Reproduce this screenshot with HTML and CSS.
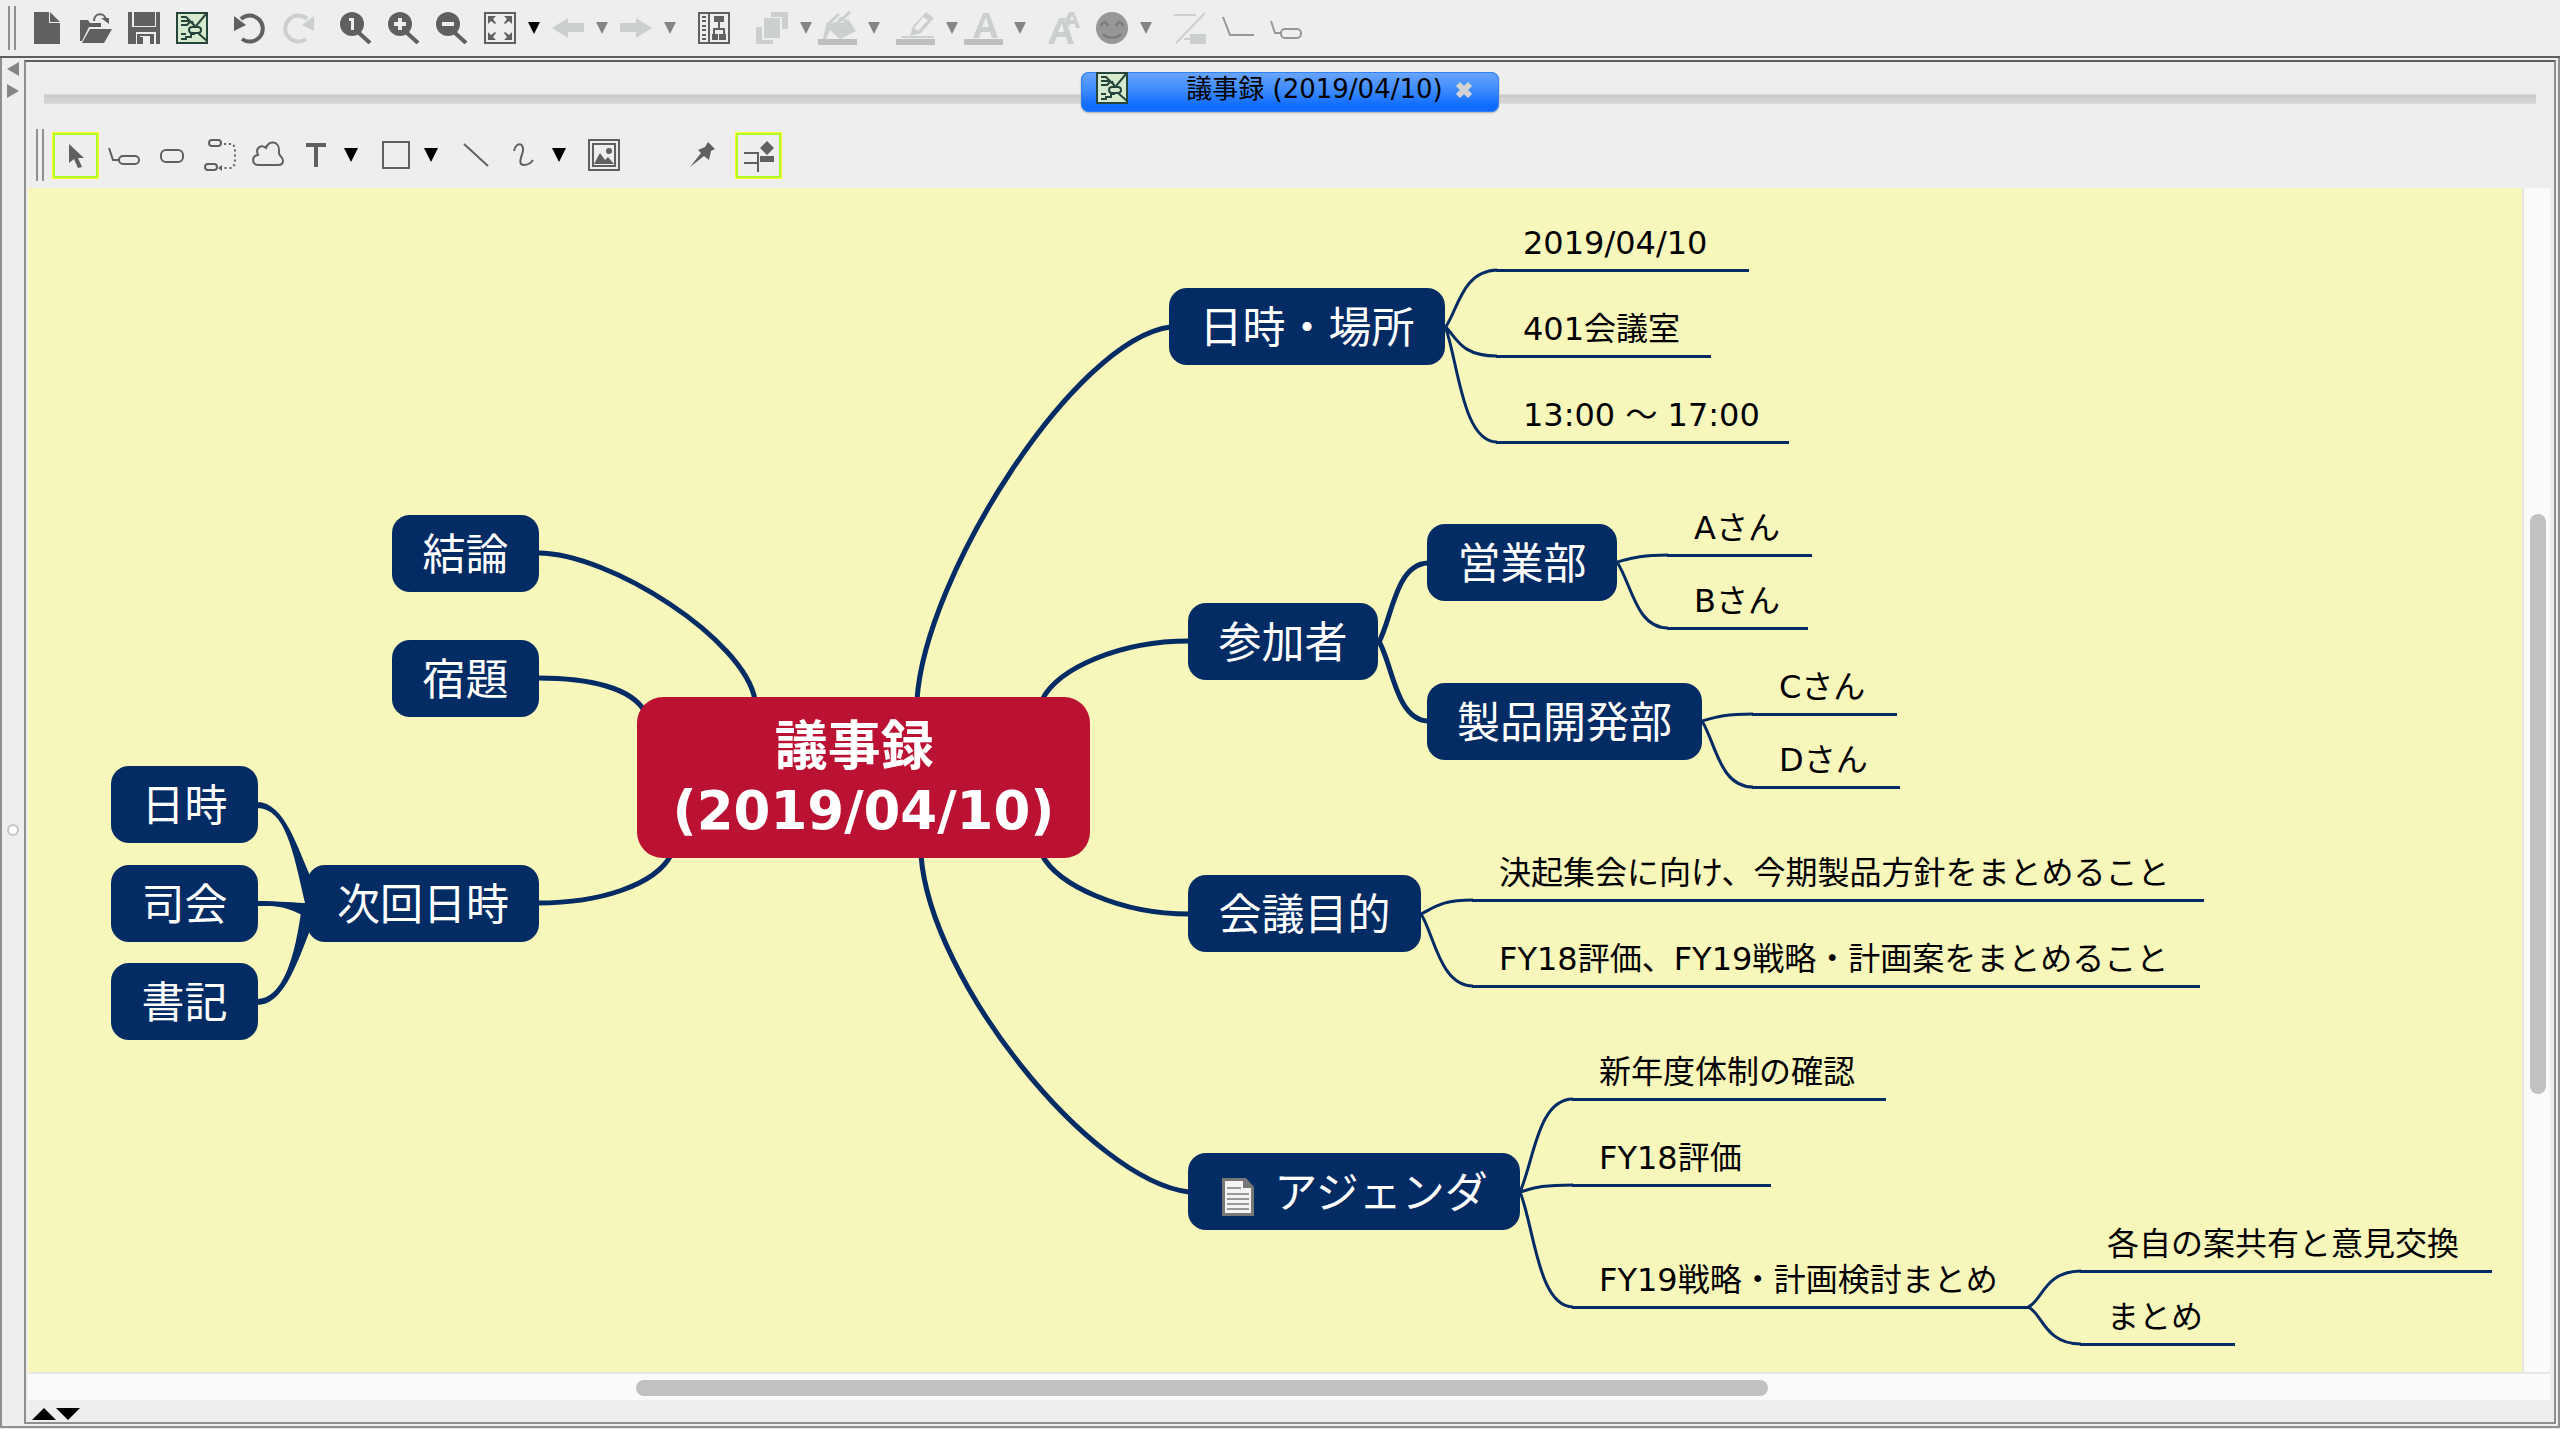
FILE: index.html
```html
<!DOCTYPE html>
<html lang="ja">
<head>
<meta charset="utf-8">
<title>議事録 (2019/04/10)</title>
<link rel="stylesheet" href="styles.css">
</head>
<body>
<svg class="defs" width="0" height="0" aria-hidden="true">
  <symbol id="caret" viewBox="0 0 12 12"><path d="M0 0h12L6 12z"/></symbol>
  <symbol id="doc" viewBox="0 0 32 32">
    <rect x="1" y="1" width="30" height="30" fill="#d8eacd" stroke="#25453a" stroke-width="2"/>
    <g fill="none" stroke="#25453a" stroke-width="2">
      <path d="M5 5h5l9 9M5 9h8M5 13h6l3-3M30 2L20 14M5 22h5M5 27h5v-2h5v-3h3v-3M22 21l9 8M16 9l2 5"/>
      <rect x="13" y="15" width="12" height="6" rx="3" fill="#d8eacd"/>
    </g>
  </symbol>
</svg>

<header class="toolbar main-toolbar" role="toolbar">
  <span class="grip"></span>
  <button class="tool" aria-label="新規"><svg viewBox="0 0 32 32"><path d="M2 0h15v11h11v21H2zM18 0l10 10H18z"/></svg></button>
  <button class="tool" aria-label="開く"><svg viewBox="0 0 32 32"><path d="M0 8h8l2 3h11v4H9L2 29H0zM10 17h22l-8 14H2z"/><path d="M14 9c0-9 12-9 12 0" fill="none" stroke="currentColor" stroke-width="2"/><path d="M21 6h8v6z"/></svg></button>
  <button class="tool" aria-label="保存"><svg viewBox="0 0 32 32"><path d="M0 0h4v15h24V0h4v32h-4V20H8v12H0zM6 0h21v14H6zM9 22h17v10h-4v-8h-10v8H9zM12 25h3v7h-3z"/></svg></button>
  <button class="tool" aria-label="マップ"><svg><use href="#doc"/></svg></button>
  <button class="tool wide" aria-label="元に戻す"><svg viewBox="0 0 32 32"><path d="M7 7a13 13 0 1 1 1 20" fill="none" stroke="currentColor" stroke-width="4"/><path d="M0 4l12 9L0 19z"/></svg></button>
  <button class="tool off" aria-label="やり直し"><svg viewBox="0 0 32 32"><path d="M25 7a13 13 0 1 0-1 20" fill="none" stroke="currentColor" stroke-width="4"/><path d="M32 4l-12 9 12 6z"/></svg></button>
  <button class="tool wide" aria-label="等倍"><svg viewBox="0 0 32 32"><circle cx="12" cy="12" r="12"/><path d="M18 20l12 11" stroke="currentColor" stroke-width="4"/><path d="M9 6h5v12h-3V9H9z" fill="#eee"/></svg></button>
  <button class="tool" aria-label="拡大"><svg viewBox="0 0 32 32"><circle cx="12" cy="12" r="12"/><path d="M18 20l12 11" stroke="currentColor" stroke-width="4"/><path d="M6 12h12M12 6v12" stroke="#eee" stroke-width="4"/></svg></button>
  <button class="tool" aria-label="縮小"><svg viewBox="0 0 32 32"><circle cx="12" cy="12" r="12"/><path d="M18 20l12 11" stroke="currentColor" stroke-width="4"/><path d="M6 12h12" stroke="#eee" stroke-width="4"/></svg></button>
  <button class="tool" aria-label="全体表示"><svg viewBox="0 0 32 32"><rect x="1" y="1" width="30" height="30" fill="none" stroke="currentColor" stroke-width="2"/><path d="M4 4h8l-3 3 3 4-1 1-4-3-3 3zM28 4h-8l3 3-3 4 1 1 4-3 3 3zM4 28h8l-3-3 3-4-1-1-4 3-3-3zM28 28h-8l3-3-3-4 1-1 4 3 3-3z"/></svg></button>
  <button class="caret" aria-label="表示メニュー"><svg><use href="#caret"/></svg></button>
  <button class="tool after-caret off" aria-label="戻る"><svg viewBox="0 0 32 32"><path d="M0 16L16 6v5h16v9H16v6z"/></svg></button>
  <button class="caret dim" aria-label="戻るメニュー"><svg><use href="#caret"/></svg></button>
  <button class="tool after-caret off" aria-label="進む"><svg viewBox="0 0 32 32"><path d="M32 16L16 6v5H0v9h16v6z"/></svg></button>
  <button class="caret dim" aria-label="進むメニュー"><svg><use href="#caret"/></svg></button>
  <button class="tool medium" aria-label="アウトライン"><svg viewBox="0 0 32 32"><path d="M1 1h30v30H1zM11 1v30" fill="none" stroke="currentColor" stroke-width="2"/><path d="M4 5h4M4 9h4M4 14h4M4 18h4M4 23h4M4 27h4" stroke="currentColor" stroke-width="2"/><path d="M16 4h10v6h-4v6h5v6h1v6h-7v-6h4v-4h-8v4h3v6h-6v-6h1v-6h5v-6h-4z"/></svg></button>
  <button class="tool wide off" aria-label="重ね順"><svg viewBox="0 0 32 32"><path d="M15 0h17v17h-6V5H15zM8 6h16v20H8zM0 15h6v13h11v4H0z"/></svg></button>
  <button class="caret dim" aria-label="重ね順メニュー"><svg><use href="#caret"/></svg></button>
  <button class="tool swatch tight off" aria-label="塗り色"><svg viewBox="0 0 40 34"><path d="M9 14l12-4 5 5 5-7 8 12-16 8-10-9-4 9H6z"/><path d="M10 14L22 3M23 10L33 1" stroke="currentColor" stroke-width="3" fill="none"/><circle cx="25" cy="10" r="3" fill="none" stroke="currentColor" stroke-width="2"/><path d="M1 28h39v6H1z" fill="#bfbfbf"/></svg></button>
  <button class="caret dim" aria-label="塗り色メニュー"><svg><use href="#caret"/></svg></button>
  <button class="tool swatch after-swatch off" aria-label="線の色"><svg viewBox="0 0 40 34"><path fill-rule="evenodd" d="M15 25l3-10L31 1l8 6-13 15zM19 17l4 3 10-11-5-3z"/><path d="M6 26h33" stroke="currentColor" stroke-width="2"/><path d="M1 28h39v6H1z" fill="#bfbfbf"/></svg></button>
  <button class="caret dim" aria-label="線の色メニュー"><svg><use href="#caret"/></svg></button>
  <button class="tool swatch tight off" aria-label="文字色"><svg viewBox="0 0 40 34"><path d="M10 27L20 2h6l9 25h-6l-2-6h-9l-2 6zM19 16h7l-3-10z" fill-rule="evenodd"/><path d="M1 28h39v6H1z" fill="#bfbfbf"/></svg></button>
  <button class="caret dim" aria-label="文字色メニュー"><svg><use href="#caret"/></svg></button>
  <button class="tool medium off" aria-label="フォント"><svg viewBox="0 0 32 32"><path fill-rule="evenodd" d="M0 32L11 6h6l9 26h-6l-2-7H9l-3 7zM10 20h6l-2-9zM17 8l4-8h5l6 16h-4l-1-4h-5l-1 3zM22 8h4l-2-5z"/></svg></button>
  <button class="tool face" aria-label="アイコン"><svg viewBox="0 0 32 32"><circle cx="16" cy="16" r="16" fill="#979797"/><path d="M5 14c2-5 5-5 7 0M20 14c2-5 5-5 7 0M7 22c5 5 13 5 18 0" fill="none" stroke="#777" stroke-width="2"/></svg></button>
  <button class="caret dim" aria-label="アイコンメニュー"><svg><use href="#caret"/></svg></button>
  <button class="tool medium off" aria-label="リンク線"><svg viewBox="0 0 32 32"><path d="M0 3h22M2 31L31 1M10 27h8" stroke="currentColor" stroke-width="2"/><path d="M16 22h16v10H16z"/></svg></button>
  <button class="tool gray" aria-label="線トピック"><svg viewBox="0 0 32 32"><path d="M1 5l7 18h24" fill="none" stroke="currentColor" stroke-width="2"/></svg></button>
  <button class="tool gray" aria-label="枠トピック"><svg viewBox="0 0 32 32"><path d="M1 9l4 12h6" fill="none" stroke="currentColor" stroke-width="2"/><rect x="11" y="17" width="20" height="9" rx="4" fill="none" stroke="currentColor" stroke-width="2"/></svg></button>
</header>

<main class="workspace">
  <aside class="divider">
    <button class="fold" aria-label="左へ"><svg viewBox="0 0 12 14"><path d="M12 0v14L0 7z"/></svg></button>
    <button class="fold" aria-label="右へ"><svg viewBox="0 0 12 14"><path d="M0 0v14l12-7z"/></svg></button>
    <span class="knob"></span>
  </aside>
  <section class="frame">
    <nav class="tabs">
      <div class="tab">
        <svg class="tab-icon"><use href="#doc"/></svg>
        <button class="tab-title">議事録 (2019/04/10)</button>
        <button class="tab-close" aria-label="閉じる"><svg viewBox="0 0 18 18"><path d="M3 3l12 12M15 3L3 15" stroke="#d3d3d3" stroke-width="6"/></svg></button>
      </div>
    </nav>
    <div class="toolbar edit-toolbar" role="toolbar">
      <span class="grip"></span>
      <button class="tool picked" aria-label="選択"><svg viewBox="0 0 32 32"><path d="M9 4v19l5-4 4 9 4-1-4-9h6z"/></svg></button>
      <button class="tool first" aria-label="トピック"><svg viewBox="0 0 32 32"><path d="M1 9l4 12h6" fill="none" stroke="currentColor" stroke-width="2"/><rect x="11" y="17" width="20" height="8" rx="4" fill="none" stroke="currentColor" stroke-width="2"/></svg></button>
      <button class="tool" aria-label="フローティング"><svg viewBox="0 0 32 32"><rect x="5" y="11" width="22" height="12" rx="5" fill="none" stroke="currentColor" stroke-width="2"/></svg></button>
      <button class="tool" aria-label="関連線"><svg viewBox="0 0 32 32"><g fill="none" stroke="currentColor" stroke-width="2"><rect x="5" y="1" width="12" height="6" rx="3"/><rect x="1" y="25" width="12" height="6" rx="3"/><path d="M20 5h9l2 4v16l-3 4H17" stroke-dasharray="2 3"/></g><path d="M18 26v6l-4-3z"/></svg></button>
      <button class="tool" aria-label="雲"><svg viewBox="0 0 32 32"><path d="M6 26C0 26-1 17 6 16C3 9 9 5 14 9C16 1 28 1 27 13C26 17 31 17 31 22Q31 26 26 26Z" fill="none" stroke="currentColor" stroke-width="2"/></svg></button>
      <button class="tool" aria-label="テキスト"><svg viewBox="0 0 32 32"><path d="M6 4h20v4h-8v20h-4V8H6z"/></svg></button>
      <button class="caret big" aria-label="テキストメニュー"><svg><use href="#caret"/></svg></button>
      <button class="tool medium" aria-label="図形"><svg viewBox="0 0 32 32"><rect x="3" y="3" width="26" height="26" fill="none" stroke="currentColor" stroke-width="2"/></svg></button>
      <button class="caret big" aria-label="図形メニュー"><svg><use href="#caret"/></svg></button>
      <button class="tool medium" aria-label="直線"><svg viewBox="0 0 32 32"><path d="M4 5l24 22" stroke="currentColor" stroke-width="2"/></svg></button>
      <button class="tool" aria-label="曲線"><svg viewBox="0 0 32 32"><path d="M6 12c2-9 10-9 9 0-1 5-6 14 1 14 4 0 7-2 9-5" fill="none" stroke="currentColor" stroke-width="2"/></svg></button>
      <button class="caret big" aria-label="曲線メニュー"><svg><use href="#caret"/></svg></button>
      <button class="tool medium" aria-label="画像"><svg viewBox="0 0 32 32"><path d="M1 1h30v30H1zM5 5h22v22H5z" fill="none" stroke="currentColor" stroke-width="2"/><path d="M6 25l6-11 5 7 3-3 6 7z"/><circle cx="21" cy="12" r="3"/></svg></button>
      <button class="tool apart" aria-label="固定"><svg viewBox="0 0 32 32"><path d="M21 3l7 7-4 2-2 9-5-4L3 28l11-14-3-3 7-3z"/></svg></button>
      <button class="tool picked second" aria-label="自動配置"><svg viewBox="0 0 32 32"><path d="M1 13h14M1 23h14M15 12v20" fill="none" stroke="currentColor" stroke-width="2"/><path d="M24 1l7 7-7 7-7-7zM17 16h14v6H17z"/></svg></button>
    </div>

    <div class="viewport">
      <div class="canvas">
        <svg class="links" viewBox="28 188 2494 1184" aria-hidden="true">
          <g class="thick">
            <path d="M917 700C925 575 1075 340 1170 327"/>
            <path d="M538 553C610 553 745 640 755 700"/>
            <path d="M538 678C590 678 632 688 645 712"/>
            <path d="M538 903C600 903 655 885 671 855"/>
            <path d="M1042 700C1058 668 1120 641 1189 641"/>
            <path d="M1042 855C1058 885 1120 914 1189 914"/>
            <path d="M921 855C930 980 1090 1180 1189 1192"/>
            <path d="M1378 644C1392 620 1395 564 1428 563M1378 640C1392 660 1395 720 1428 721"/>
          </g>
          <g class="taper">
            <path d="M257 802C285 802 298 850 312 880L312 903L305 903C293 850 285 808 257 808Z"/>
            <path d="M257 901C280 901 295 903 308 903L308 918C285 906 280 906 257 906Z"/>
            <path d="M257 999C282 999 295 960 302 905L312 905L312 925C295 970 282 1005 257 1005Z"/>
          </g>
          <g class="thin">
            <path d="M1445 328C1458 310 1462 271 1497 270M1445 326C1458 340 1462 356 1497 356M1445 326C1458 360 1462 442 1497 442"/>
            <path d="M1617 562C1632 558 1640 555 1668 555M1617 562C1632 585 1636 628 1668 628"/>
            <path d="M1702 721C1716 717 1724 714 1753 714M1702 721C1716 744 1720 787 1753 787"/>
            <path d="M1421 914C1434 908 1440 900 1473 900M1421 914C1434 934 1440 986 1473 986"/>
            <path d="M1520 1192C1534 1160 1538 1099 1573 1099M1520 1192C1534 1188 1540 1185 1573 1185M1520 1192C1534 1226 1538 1307 1573 1307"/>
            <path d="M2028 1307C2042 1302 2044 1271 2081 1271M2028 1307C2042 1312 2044 1344 2081 1344"/>
          </g>
        </svg>

        <h1 class="root">議事録&nbsp;<br>(2019/04/10)</h1>

        <div class="topic conclusion">結論</div>
        <div class="topic homework">宿題</div>
        <div class="topic next">次回日時</div>
        <div class="topic next-date">日時</div>
        <div class="topic next-chair">司会</div>
        <div class="topic next-clerk">書記</div>

        <div class="topic place">日時・場所</div>
        <div class="leaf place-date">2019/04/10</div>
        <div class="leaf place-room">401会議室</div>
        <div class="leaf place-time">13:00 〜 17:00</div>

        <div class="topic members">参加者</div>
        <div class="topic sales">営業部</div>
        <div class="leaf sales-a">Aさん</div>
        <div class="leaf sales-b">Bさん</div>
        <div class="topic product">製品開発部</div>
        <div class="leaf product-c">Cさん</div>
        <div class="leaf product-d">Dさん</div>

        <div class="topic goal">会議目的</div>
        <div class="leaf goal-plan">決起集会に向け、今期製品方針をまとめること</div>
        <div class="leaf goal-review">FY18評価、FY19戦略・計画案をまとめること</div>

        <div class="topic agenda"><svg class="note" viewBox="0 0 32 38"><path d="M0 0h24l8 9v29H0z" fill="#777"/><path d="M3 3h18v7h8v25H3z" fill="#f4f4f4"/><path d="M5 10h14M5 16h22M5 21h22M5 26h22M5 31h22" stroke="#999" stroke-width="2"/></svg>アジェンダ</div>
        <div class="leaf agenda-team">新年度体制の確認</div>
        <div class="leaf agenda-review">FY18評価</div>
        <div class="leaf agenda-plan">FY19戦略・計画検討まとめ</div>
        <div class="leaf plan-share">各自の案共有と意見交換</div>
        <div class="leaf plan-summary">まとめ</div>
      </div>
      <div class="vscroll"><div class="vthumb"></div></div>
      <div class="hscroll"><div class="hthumb"></div></div>
    </div>

    <footer class="status">
      <button class="fold" aria-label="上へ"><svg viewBox="0 0 24 12"><path d="M0 12h24L12 0z"/></svg></button>
      <button class="fold" aria-label="下へ"><svg viewBox="0 0 24 12"><path d="M0 0h24L12 12z"/></svg></button>
    </footer>
  </section>
</main>
</body>
</html>
```
FILE: styles.css
```css
* { box-sizing: border-box; }

body {
  margin: 0;
  min-height: 100vh;
  display: flex;
  flex-direction: column;
  background: #eee;
  color: #000;
  font-family: "DejaVu Sans", "Noto Sans CJK JP", sans-serif;
}

button {
  flex: none;
  display: block;
  margin: 0;
  padding: 0;
  border: 0;
  background: none;
  color: inherit;
  font: inherit;
}

svg { display: block; fill: currentColor; }
.defs { position: absolute; }

/* Toolbars */
.toolbar { display: flex; align-items: center; color: #625f60; }
.main-toolbar { height: 58px; padding: 0 8px; border-bottom: 2px solid #5f5d5e; }
.edit-toolbar { height: 58px; padding: 0 10px 8px; }
.grip {
  flex: none;
  width: 8px;
  height: 44px;
  margin-right: 16px;
  border: solid #8f8f8f;
  border-width: 0 2px;
}
.edit-toolbar .grip { height: 52px; margin-right: 8px; }

.tool { width: 32px; height: 32px; }
.tool svg { width: 100%; height: 100%; }
.tool + .tool { margin-left: 16px; }
.toolbar .wide { margin-left: 26px; }
.toolbar .medium { margin-left: 22px; }
.toolbar .tight { margin-left: 5px; }
.toolbar .after-caret { margin-left: 12px; }
.toolbar .after-swatch { margin-left: 15px; }
.off { color: #cbcfcd; }
.gray { color: #979797; }

.swatch { width: 40px; height: 34px; }
.caret { width: 12px; height: 12px; margin-left: 12px; color: #000; }
.swatch + .caret { margin-left: 11px; }
.caret svg { width: 100%; height: 100%; }
.dim { color: #858585; }
.big { width: 14px; height: 14px; }

.picked {
  width: 47px;
  height: 47px;
  padding: 5px;
  border: 3px solid #b0fb2c;
  outline: 1px solid #fdfd2a;
  outline-offset: -1px;
}
.picked svg { width: 32px; height: 32px; }
.toolbar .first { margin-left: 9px; }
.toolbar .apart { margin-left: 67px; }

/* Window body */
.workspace {
  flex: 1;
  display: flex;
  margin-bottom: 1px;
  padding: 2px 2px 2px 0;
  border: 2px solid #8f8f8f;
  border-top: 0;
}
.divider {
  flex: none;
  width: 22px;
  position: relative;
  display: flex;
  flex-direction: column;
  align-items: center;
  gap: 8px;
  padding-top: 2px;
  color: #858585;
}
.divider .fold svg { width: 12px; height: 14px; }
.knob {
  position: absolute;
  top: 56%;
  width: 12px;
  height: 12px;
  border: 2px solid #c4c4c4;
  border-radius: 50%;
  background: #fff;
}
.frame {
  flex: 1;
  min-width: 0;
  display: flex;
  flex-direction: column;
  border: 2px solid #8f8f8f;
  border-top-color: #5f5d5e;
}

/* Document tabs */
.tabs {
  height: 68px;
  margin: 0 18px;
  padding-top: 10px;
  display: flex;
  justify-content: center;
  align-items: flex-start;
  background: linear-gradient(#dcdcdc, #c6c6c6 20%, #d3d3d3 40%, #d3d3d3 75%, #dcdcdc) 0 32px / 100% 10px no-repeat;
}
.tab {
  height: 40px;
  display: flex;
  align-items: flex-start;
  padding: 0 26px 0 15px;
  border-radius: 8px;
  background: linear-gradient(#6ba5fb, #3d8bfd 45%, #0f6bff 85%);
  box-shadow: 0 1px 2px #aaa, inset 0 0 0 1px #2f80f5;
}
.tab-icon { width: 32px; height: 32px; }
.tab-title { margin-left: 58px; font-size: 26px; line-height: 34px; }
.tab-close { margin: 9px 0 0 12px; width: 18px; height: 18px; }

/* Map area */
.viewport {
  flex: 1;
  display: grid;
  grid-template: 1fr 28px / 1fr 28px;
  min-height: 600px;
  padding: 0 4px 0 2px;
}
.canvas { position: relative; overflow: hidden; background: #f7f6bb; }
.vscroll { border-left: 2px solid #e6e6e6; background: #fafafa; padding-left: 6px; }
.vthumb { width: 16px; height: 49%; position: relative; top: 27.5%; border-radius: 8px; background: #c1c1c1; }
.hscroll { grid-column: 1 / -1; border-top: 2px solid #e6e6e6; background: #fafafa; padding-top: 6px; }
.hthumb { width: 44.9%; height: 16px; margin-left: 24.1%; border-radius: 8px; background: #c1c1c1; }
.status { display: flex; height: 22px; padding: 6px 6px 0; }
.status .fold svg { width: 24px; height: 12px; }

/* Map contents */
.links { position: absolute; left: 0; top: 0; width: 2494px; height: 1184px; }
.thick, .thin { fill: none; stroke: #032b64; }
.thick { stroke-width: 5; }
.thin { stroke-width: 3; }
.taper { fill: #032b64; }

.root, .topic, .leaf { position: absolute; white-space: nowrap; }
.root {
  left: 609px;
  top: 509px;
  width: 453px;
  height: 161px;
  margin: 0;
  padding-top: 18px;
  border-radius: 26px;
  background: #bb1133;
  color: #fff;
  font-size: 53px;
  line-height: 64px;
  font-weight: bold;
  text-align: center;
}
.topic {
  height: 77px;
  display: flex;
  align-items: center;
  justify-content: center;
  padding-top: 4px;
  border-radius: 18px;
  background: #032b64;
  color: #fff;
  font-size: 43px;
  line-height: 73px;
}
.leaf {
  padding: 0 0 4px 27px;
  border-bottom: 3px solid #032b64;
  font-size: 32px;
  line-height: 44px;
}
.note { width: 32px; height: 38px; margin: 6px 20px 0 2px; }

.conclusion { left: 364px; top: 327px; width: 147px; }
.homework { left: 364px; top: 452px; width: 147px; }
.next { left: 279px; top: 677px; width: 232px; }
.next-date { left: 83px; top: 578px; width: 147px; }
.next-chair { left: 83px; top: 677px; width: 147px; }
.next-clerk { left: 83px; top: 775px; width: 147px; }

.place { left: 1141px; top: 100px; width: 276px; }
.place-date { left: 1468px; top: 33px; width: 253px; }
.place-room { left: 1468px; top: 119px; width: 215px; }
.place-time { left: 1468px; top: 205px; width: 293px; }

.members { left: 1160px; top: 415px; width: 190px; }
.sales { left: 1399px; top: 336px; width: 190px; }
.sales-a { left: 1639px; top: 318px; width: 145px; }
.sales-b { left: 1639px; top: 391px; width: 141px; }
.product { left: 1399px; top: 495px; width: 275px; }
.product-c { left: 1724px; top: 477px; width: 145px; }
.product-d { left: 1724px; top: 550px; width: 148px; }

.goal { left: 1160px; top: 687px; width: 233px; }
.goal-plan { left: 1444px; top: 663px; width: 732px; }
.goal-review { left: 1444px; top: 749px; width: 728px; }

.agenda { left: 1160px; top: 965px; width: 332px; }
.agenda-team { left: 1544px; top: 862px; width: 314px; }
.agenda-review { left: 1544px; top: 948px; width: 199px; }
.agenda-plan { left: 1544px; top: 1070px; width: 457px; }
.plan-share { left: 2052px; top: 1034px; width: 412px; }
.plan-summary { left: 2052px; top: 1107px; width: 155px; }
```
